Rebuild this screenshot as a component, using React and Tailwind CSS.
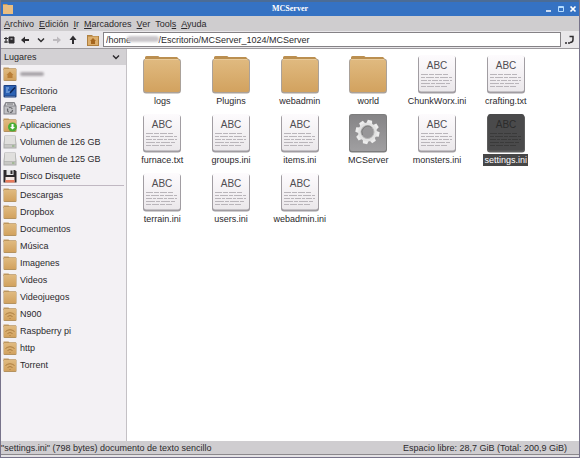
import { useState } from 'react'

const MENU = [
  ['A', 'rchivo'],
  ['E', 'dición'],
  ['I', 'r'],
  ['M', 'arcadores'],
  ['V', 'er'],
  ['', 'Tool', 's'],
  ['A', 'yuda'],
]

const PLACES = [
  { icon: 'home', name: '' },
  { icon: 'desktop', name: 'Escritorio' },
  { icon: 'trash', name: 'Papelera' },
  { icon: 'apps', name: 'Aplicaciones' },
  { icon: 'drive', name: 'Volumen de 126 GB' },
  { icon: 'drive', name: 'Volumen de 125 GB' },
  { icon: 'floppy', name: 'Disco Disquete' },
]

const BOOKMARKS = [
  { icon: 'folder', name: 'Descargas' },
  { icon: 'folder', name: 'Dropbox' },
  { icon: 'folder', name: 'Documentos' },
  { icon: 'folder', name: 'Música' },
  { icon: 'folder', name: 'Imagenes' },
  { icon: 'folder', name: 'Videos' },
  { icon: 'folder', name: 'Videojuegos' },
  { icon: 'remote', name: 'N900' },
  { icon: 'remote', name: 'Raspberry pi' },
  { icon: 'remote', name: 'http' },
  { icon: 'remote', name: 'Torrent' },
]

const FILES = [
  { type: 'folder', name: 'logs' },
  { type: 'folder', name: 'Plugins' },
  { type: 'folder', name: 'webadmin' },
  { type: 'folder', name: 'world' },
  { type: 'text', name: 'ChunkWorx.ini' },
  { type: 'text', name: 'crafting.txt' },
  { type: 'text', name: 'furnace.txt' },
  { type: 'text', name: 'groups.ini' },
  { type: 'text', name: 'items.ini' },
  { type: 'exec', name: 'MCServer' },
  { type: 'text', name: 'monsters.ini' },
  { type: 'text', name: 'settings.ini' },
  { type: 'text', name: 'terrain.ini' },
  { type: 'text', name: 'users.ini' },
  { type: 'text', name: 'webadmin.ini' },
]

// Gradients shared by every icon on the page
function Gradients() {
  return (
    <svg width="0" height="0" className="absolute" aria-hidden="true">
      <defs>
        <linearGradient id="folder" x1="0" y1="0" x2="0" y2="1">
          <stop offset="0" stopColor="#e0ba80" />
          <stop offset="1" stopColor="#d2a25f" />
        </linearGradient>
        <linearGradient id="paper" x1="0" y1="0" x2="0" y2="1">
          <stop offset="0" stopColor="#fdfbfd" />
          <stop offset="1" stopColor="#ebe8eb" />
        </linearGradient>
        <linearGradient id="metal" x1="0" y1="0" x2="0" y2="1">
          <stop offset="0" stopColor="#858486" />
          <stop offset="1" stopColor="#a09fa1" />
        </linearGradient>
      </defs>
    </svg>
  )
}

function FolderIcon() {
  return (
    <svg viewBox="0 0 40 40" className="size-10" aria-hidden="true">
      <path d="M3 8V2.500Q3 1 4.500 1H15.500Q17 1 17.500 2H35L38 5V10Z" fill="#bb8f50" />
      <path d="M1 7Q1 4 3 4H37Q39 4 39 7V35Q39 38.500 36 38.500H4Q1 38.500 1 35Z" fill="#aaa199" />
      <path d="M2 7Q2 4 4 4H36L38 6V34.500Q38 37 35.500 37H4.500Q2 37 2 34.500Z" fill="url(#folder)" />
      <path d="M3 4.500H36" stroke="#e9cb9a" />
    </svg>
  )
}

function TextIcon({ dark }) {
  const line = dark ? '#3a3a3a' : '#b9b5ba'
  return (
    <svg viewBox="0 0 40 40" className="size-10" aria-hidden="true">
      <rect x="1" y="1" width="38" height="37.500" rx="3" fill={dark ? '#5c5c5c' : '#a19da2'} />
      <rect x="2" y="0" width="36" height="36.500" rx="2" fill={dark ? '#4a4a4b' : 'url(#paper)'} />
      <text x="20" y="14" textAnchor="middle" fontSize="10" fontFamily="Liberation Sans, sans-serif" fill={dark ? '#2c2c2c' : '#504d52'}>ABC</text>
      <g stroke={line}>
        <path d="M4 19.500H31" strokeDasharray="7 1 5 1" />
        <path d="M4 22.500H35" strokeDasharray="4 1 8 1" />
        <path d="M4 25.500H35" strokeDasharray="6 1 3 1" />
        <path d="M4 28.500H33" strokeDasharray="9 1 4 1" />
        <path d="M4 31.500H30" strokeDasharray="5 1 7 1" />
      </g>
    </svg>
  )
}

function ExecIcon() {
  return (
    <svg viewBox="0 0 40 40" className="size-10" aria-hidden="true">
      <rect x="1" y="0" width="38" height="38.500" rx="3" fill="#7d7d7d" />
      <rect x="2" y="1" width="36" height="36" rx="2" fill="url(#metal)" />
      <g transform="translate(19.500 18)">
        <g fill="#ececec">
          {[0, 45, 90, 135, 180, 225, 270, 315].map((angle) => (
            <path key={angle} d="M-3 -8L-2.200 -12H2.200L3 -8Z" transform={`rotate(${angle + 12})`} />
          ))}
        </g>
        <circle r="7.800" fill="none" stroke="#e2e2e2" strokeWidth="3.500" />
        <circle r="6.500" fill="#979698" stroke="#b4b4b4" />
        <path d="M-5 3A6 6 0 0 1 4 -4.500" fill="none" stroke="#7c7c7c" />
      </g>
    </svg>
  )
}

function PlaceIcon({ icon }) {
  const folder = icon === 'folder' || icon === 'remote' || icon === 'home' || icon === 'apps'
  return (
    <svg viewBox="0 0 14 14" className="size-3.5 shrink-0" aria-hidden="true">
      {folder && (
        <>
          <path d="M0.500 3V0.500H5.500L6.500 1.500H13V4Z" fill="#c39a60" />
          <rect x="0.500" y="1.500" width="13" height="12.500" rx="1" fill="#b4925f" />
          <rect x="1" y="2" width="12" height="11" fill="url(#folder)" />
        </>
      )}
      {icon === 'home' && <path d="M7 4.500L3.500 8H4.500V11H9.500V8H10.500Z" fill="#b97f38" />}
      {icon === 'remote' && (
        <g fill="none" stroke="#a5763a" strokeWidth="0.900">
          <path d="M2.500 7.500Q7 4 11.500 7.500M4.500 9.500Q7 7.500 9.500 9.500" />
          <path d="M6.500 11.500H7.500" />
        </g>
      )}
      {icon === 'apps' && (
        <>
          <circle cx="9.500" cy="9" r="4.500" fill="#4aad35" />
          <path d="M8.500 6H10.500V9H12L9.500 11.500L7 9H8.500Z" fill="#fff" />
        </>
      )}
      {icon === 'desktop' && (
        <>
          <rect x="0.500" y="1" width="13" height="12.500" rx="1" fill="#1d4182" />
          <rect x="1.500" y="2" width="11" height="9.500" fill="#2d62b4" />
          <path d="M3 4H6M3 6H5M3 8H7" stroke="#9cc1f2" />
          <path d="M7 9L12 3.500" stroke="#0e2350" strokeWidth="1.500" />
          <path d="M2 12.500H12" stroke="#6a7fa8" strokeWidth="0.700" />
        </>
      )}
      {icon === 'trash' && (
        <>
          <path d="M2.500 1H11.500L13.500 5V13.500H0.500V5Z" fill="#85858a" />
          <path d="M3.500 2H10.500L11.500 4.500H2.500Z" fill="#d9d9dc" />
          <path d="M4 3H10" stroke="#68686c" />
          <rect x="1.500" y="5.500" width="11" height="7" fill="#c0c0c4" />
          <circle cx="7" cy="9" r="2.500" fill="none" stroke="#68686c" strokeWidth="1.200" strokeDasharray="4 1.200" />
        </>
      )}
      {icon === 'drive' && (
        <>
          <path d="M1.500 0.500H12.500L13.500 9V13.500H0.500V9Z" fill="#acacaa" />
          <path d="M2 1H12L12.500 9H1.500Z" fill="#e0dfdd" />
          <rect x="1.500" y="9.500" width="11" height="3" fill="#c8c8c5" />
          <path d="M9 11H11.500" stroke="#7fa86a" />
        </>
      )}
      {icon === 'floppy' && (
        <>
          <path d="M0.500 1H12L13.500 2.500V13.500H0.500Z" fill="#2e2a2c" />
          <rect x="3.500" y="1" width="7" height="5" fill="#e4e4e6" />
          <rect x="7.500" y="1.500" width="2" height="3.500" fill="#2e2a2c" />
          <rect x="2.500" y="8" width="9" height="5.500" fill="#f5e7e3" />
          <rect x="2.500" y="11" width="9" height="2.500" fill="#e8795a" />
        </>
      )}
    </svg>
  )
}

function Place({ place }) {
  return (
    <li>
      <button type="button" className="flex h-[17px] w-full items-center gap-[3px] pl-0.5 text-left" aria-label={place.name || 'Carpeta personal'}>
        <PlaceIcon icon={place.icon} />
        {place.name ? (
          <span className="whitespace-nowrap">{place.name}</span>
        ) : (
          <span className="h-1 w-6 rounded-full bg-[#a9a5aa] blur-[1px]"></span>
        )}
      </button>
    </li>
  )
}

function ToolButton({ label, children }) {
  return (
    <button type="button" aria-label={label} className="flex size-4 items-center justify-center">
      <svg viewBox="0 0 12 12" className="size-3" fill="none" stroke="#2f2d30" strokeWidth="2">
        {children}
      </svg>
    </button>
  )
}

export default function App() {
  const [selected, setSelected] = useState('settings.ini')
  const [path, setPath] = useState('/home' + '\u00a0'.repeat(11) + '/Escritorio/MCServer_1024/MCServer')

  return (
    <div className="flex min-h-screen flex-col border-x border-b border-[#77738a] bg-[#d2d0d3] font-['Liberation_Sans',sans-serif] text-[9px] leading-3 text-[#2b292c]">
      <Gradients />
      <header className="flex h-4 items-center border-t-2 border-[#4b6c96] bg-[#3572c3] px-0.5 text-white">
        <div className="flex flex-1">
          <svg viewBox="0 0 10 10" className="size-2.5" aria-hidden="true">
            <path d="M0 0H4L5 1H10V9H0Z" fill="#c79a5b" />
            <rect x="0" y="1" width="10" height="9" fill="#e9bd80" />
          </svg>
        </div>
        <h1 className="font-['Liberation_Serif',serif] text-[8px] font-bold">MCServer</h1>
        <div className="flex flex-1 justify-end gap-1">
          <button type="button" aria-label="Minimizar">
            <svg viewBox="0 0 8 8" className="size-2"><path d="M1 6H6" stroke="#fff" strokeWidth="1.500" /></svg>
          </button>
          <button type="button" aria-label="Maximizar">
            <svg viewBox="0 0 8 8" className="size-2" fill="none" stroke="#b5dcff"><path d="M1.500 1.500H6.500V6.500H1.500ZM1.500 2.500H6.500" /></svg>
          </button>
          <button type="button" aria-label="Cerrar">
            <svg viewBox="0 0 8 8" className="size-2"><path d="M1.500 1.500L6.500 6.500M6.500 1.500L1.500 6.500" stroke="#fff" strokeWidth="1.700" /></svg>
          </button>
        </div>
      </header>

      <nav className="flex h-[15px] items-center gap-[5px] bg-[#cfcdcf] px-[3px]">
        {MENU.map(([key, rest, tail]) => (
          <button key={key + rest} type="button">
            {key && <u>{key}</u>}
            {rest}
            {tail && <u>{tail}</u>}
          </button>
        ))}
      </nav>

      <div className="flex h-[18px] items-center border-b border-[#9d9a9e] bg-[#e9e7ea] pr-0.5">
        <ToolButton label="Nueva pestaña">
          <path d="M1 4.500H5M1 8H5M3 3V9" strokeWidth="1.200" />
          <path d="M6 3H11V9H6Z" fill="#2f2d30" strokeWidth="1" />
          <path d="M7.500 5H9.500" stroke="#e9e7ea" strokeWidth="1" />
        </ToolButton>
        <ToolButton label="Atrás">
          <path d="M10 6H5" />
          <path d="M2 6L6 2.500V9.500Z" fill="#2f2d30" stroke="none" />
        </ToolButton>
        <ToolButton label="Historial">
          <path d="M3 4.500L6 7.500L9 4.500" strokeWidth="1.500" />
        </ToolButton>
        <ToolButton label="Adelante">
          <path d="M2 6H7" stroke="#bdbabe" />
          <path d="M10 6L6 2.500V9.500Z" fill="#bdbabe" stroke="none" />
        </ToolButton>
        <ToolButton label="Subir">
          <path d="M6 10V5" />
          <path d="M6 1.500L9.500 6H2.500Z" fill="#2f2d30" stroke="none" />
        </ToolButton>
        <button type="button" aria-label="Carpeta personal" className="ml-1 flex size-4 items-center justify-center">
          <svg viewBox="0 0 12 12" className="size-3" aria-hidden="true">
            <path d="M0 1H5L6 2H12V12H0Z" fill="#b0803f" />
            <rect x="1" y="2.500" width="10" height="8.500" fill="#dcae6d" />
            <path d="M6 4L3 7H4V10H8V7H9Z" fill="#a5661e" />
          </svg>
        </button>
        <div className="relative ml-0.5 flex-1">
          <input
            type="text"
            aria-label="Ubicación"
            value={path}
            onChange={(e) => setPath(e.target.value)}
            className="block h-[15px] w-full border border-[#858286] bg-white px-0.5 leading-3 outline-none"
          />
          <span className="absolute left-6 top-1 h-1.5 w-8 rounded-full bg-[#c9c6ca] blur-[1px]"></span>
        </div>
        <ToolButton label="Ir">
          <path d="M6.500 2.500H10V5.500Q10 8.500 7 8.500" strokeWidth="1.500" />
          <path d="M2 9H4M5 9H7" strokeWidth="1.500" />
        </ToolButton>
      </div>

      <div className="flex flex-1">
        <aside className="w-[126px] shrink-0 border-r border-[#c4c1c5] bg-[#f3f1f4]">
          <button type="button" className="flex h-4 w-full items-center justify-between bg-[#d3d1d4] pl-[3px] pr-1.5">
            Lugares
            <svg viewBox="0 0 8 8" className="size-2" fill="none" stroke="#2b292c" strokeWidth="1.400"><path d="M1 2.500L4 5.500L7 2.500" /></svg>
          </button>
          <ul>
            {PLACES.map((place, i) => <Place key={i} place={place} />)}
          </ul>
          <hr className="mr-0.5 mt-px border-[#c0b8c2]" />
          <ul>
            {BOOKMARKS.map((place) => <Place key={place.name} place={place} />)}
          </ul>
        </aside>

        <main className="flex-1 bg-white pl-px pt-1.5">
          <div className="grid max-w-[412px] grid-cols-6">
            {FILES.map(({ type, name }) => {
              const active = name === selected
              return (
                <button key={name} type="button" aria-pressed={active} onClick={() => setSelected(name)} className="flex h-[59px] flex-col items-center">
                  {type === 'folder' && <FolderIcon />}
                  {type === 'text' && <TextIcon dark={active} />}
                  {type === 'exec' && <ExecIcon />}
                  <span className={active ? 'bg-[#474747] px-px text-white' : 'px-px'}>{name}</span>
                </button>
              )
            })}
          </div>
        </main>
      </div>

      <footer className="bg-[#cfcdd0]">
        <div className="flex justify-between border-b border-[#8b888c] pr-3 pt-px">
          <span>"settings.ini" (798 bytes) documento de texto sencillo</span>
          <span>Espacio libre: 28,7 GiB (Total: 200,9 GiB)</span>
        </div>
        <div className="h-0.5 bg-[#e4e2e5]"></div>
      </footer>
    </div>
  )
}
